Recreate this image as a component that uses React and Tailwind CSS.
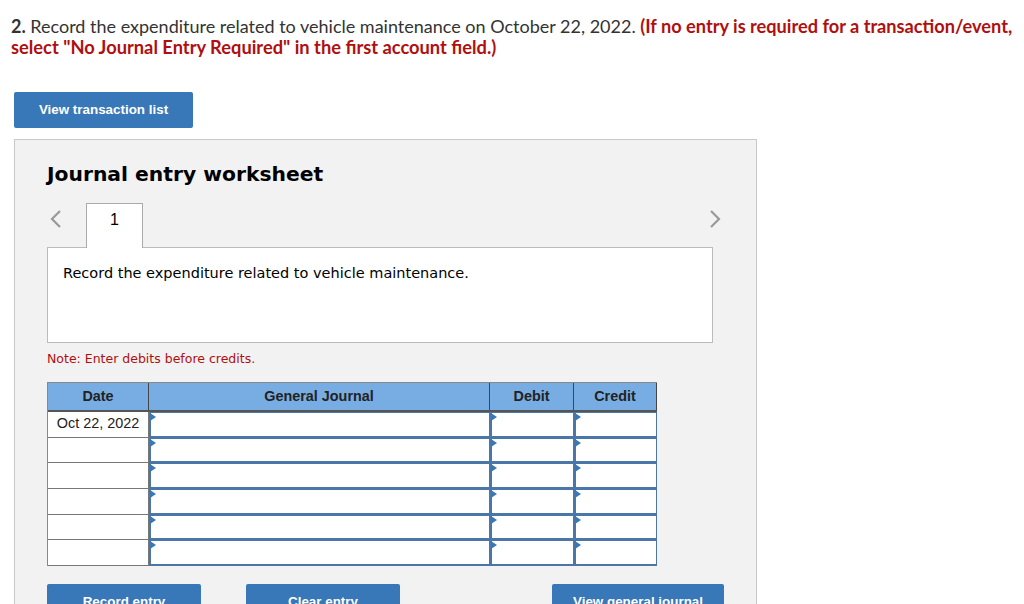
const Button = ({ label, width }) => {
  return (
    <div className={`${width} h-[36px] bg-[#3877b8] rounded-[2px] text-white text-[13.4px] font-bold flex items-center justify-center font-['Liberation_Sans',sans-serif]`}>
      {label}
    </div>
  )
}

const InputCell = ({ width }) => {
  return (
    <div className={`${width} relative h-full bg-white border-2 border-[#4a76a8] border-t-[1.5px] border-r-[1.5px]`}>
      <div className="absolute -left-[1px] top-0 w-0 h-0 border-y-[4px] border-y-transparent border-l-[6px] border-l-[#3877b8]"></div>
    </div>
  )
}

const rows = ['Oct 22, 2022', '', '', '', '', '']

const Row = ({ date }) => {
  return (
    <div className="flex h-[25.7px]">
      <div className="w-[101px] h-full bg-white border-r border-b border-[#777] pb-[1px] flex items-center justify-center text-[14.4px] text-[#222]">
        {date}
      </div>
      <InputCell width="w-[341px]" />
      <InputCell width="w-[84px]" />
      <InputCell width="w-[83px]" />
    </div>
  )
}

const HeaderCell = ({ label, width }) => {
  return (
    <div className={`${width} h-full flex items-center justify-center border-r border-[#444] text-[14.4px] font-bold text-[#222]`}>
      {label}
    </div>
  )
}

export default function App() {
  return (
    <div className="w-[1024px] h-[604px] overflow-hidden bg-white">
      <div className="pl-[11px] pt-[16px] text-[18px] leading-[21px] text-[#333] font-['Lato',sans-serif] whitespace-nowrap">
        <div>
          <b>2.</b> Record the expenditure related to vehicle maintenance on October 22, 2022.{' '}
          <b className="text-[18.2px] text-[#b00f0f]">(If no entry is required for a transaction/event,</b>
        </div>
        <div className="text-[18.3px] font-bold text-[#b00f0f]">select "No Journal Entry Required" in the first account field.)</div>
      </div>

      <div className="pl-[14px] pt-[34px]">
        <Button label="View transaction list" width="w-[179px]" />
      </div>

      <div className="ml-[14px] mt-[11px] w-[743px] h-[500px] bg-[#f2f2f2] border border-[#c8c8c8] pl-[32px] font-['DejaVu_Sans',sans-serif]">
        <h2 className="pt-[20px] text-[20.3px] leading-[28px] font-bold text-black">Journal entry worksheet</h2>

        <div className="mt-[15px] w-[666px] flex items-end justify-between h-[45px] relative">
          <div className="flex items-end h-full">
            <svg className="absolute left-[2px] top-[6px]" width="14" height="20" viewBox="0 0 14 20" fill="none" stroke="#999" strokeWidth="2.2">
              <path d="M11 2 3 10l8 8" />
            </svg>
            <div className="relative z-10 ml-[39px] w-[57px] h-[45px] bg-white border border-b-0 border-[#aaa] flex justify-center pt-[7px] text-[16px] leading-[18px] text-black font-['Liberation_Sans',sans-serif]">
              1
            </div>
          </div>
          <svg className="absolute right-[-9px] top-[6px]" width="14" height="20" viewBox="0 0 14 20" fill="none" stroke="#999" strokeWidth="2.2">
            <path d="M3 2l8 8-8 8" />
          </svg>
        </div>

        <div className="-mt-[1px] w-[666px] h-[96px] bg-white border border-[#bbb] pl-[15px] pt-[15px] text-[14.5px] leading-[20px] text-black">
          Record the expenditure related to vehicle maintenance.
        </div>

        <p className="mt-[8px] text-[12.5px] leading-[16px] text-[#b00f0f]">Note: Enter debits before credits.</p>

        <div className="mt-[15px] w-[610px] border-l border-t border-[#888] font-['Liberation_Sans',sans-serif]">
          <div className="flex h-[29px] bg-[#78ade3] border-b-2 border-[#555]">
            <HeaderCell label="Date" width="w-[101px]" />
            <HeaderCell label="General Journal" width="w-[341px]" />
            <HeaderCell label="Debit" width="w-[84px]" />
            <HeaderCell label="Credit" width="w-[83px]" />
          </div>
          {rows.map((date, i) => <Row key={i} date={date} />)}
        </div>

        <div className="mt-[18px] w-[677px] flex">
          <Button label="Record entry" width="w-[154px]" />
          <div className="ml-[45px]">
            <Button label="Clear entry" width="w-[154px]" />
          </div>
          <div className="ml-auto">
            <Button label="View general journal" width="w-[172px]" />
          </div>
        </div>
      </div>
    </div>
  )
}
